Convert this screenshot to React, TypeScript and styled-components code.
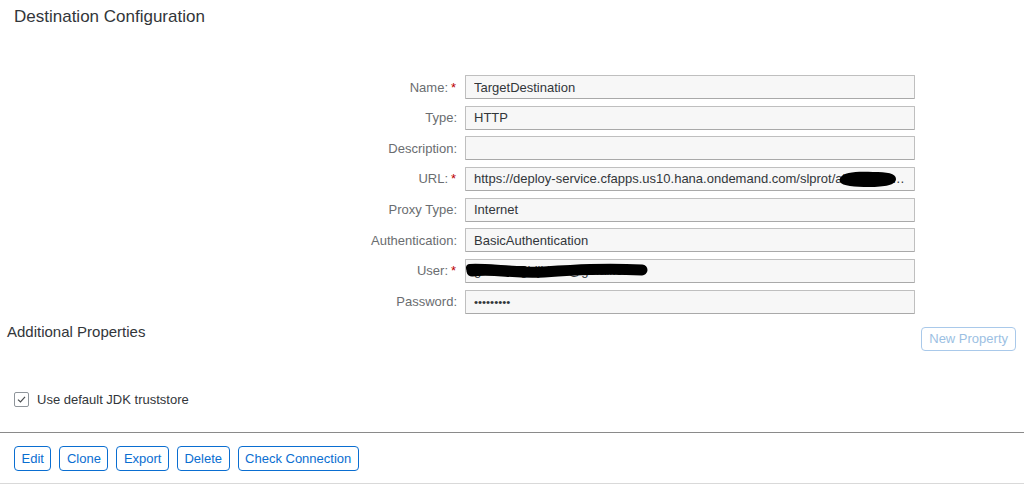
import styled, { createGlobalStyle } from "styled-components";
import type { JSX } from "react";

const GlobalStyle = createGlobalStyle`
  html, body {
    margin: 0;
    padding: 0;
    background: #ffffff;
    font-family: "Liberation Sans", Arial, sans-serif;
    color: #32363a;
  }
`;

type Field = {
  label: string;
  value: string;
  required?: boolean;
  redact?: "url" | "user";
};

const fields: Field[] = [
  { label: "Name:", value: "TargetDestination", required: true },
  { label: "Type:", value: "HTTP" },
  { label: "Description:", value: "" },
  {
    label: "URL:",
    value:
      "https://deploy-service.cfapps.us10.hana.ondemand.com/slprot/abcdefghijk/destination",
    required: true,
    redact: "url",
  },
  { label: "Proxy Type:", value: "Internet" },
  { label: "Authentication:", value: "BasicAuthentication" },
  { label: "User:", value: "gabcdefghijklmn@gmail.com", required: true, redact: "user" },
  { label: "Password:", value: "•••••••••" },
];

function App() {
  return (
    <Page>
      <GlobalStyle />
      <Title>Destination Configuration</Title>

      <Form>
        {fields.map((f) => (
          <FieldRow key={f.label} field={f} />
        ))}
      </Form>

      <SectionRow>
        <SectionTitle>Additional Properties</SectionTitle>
        <GhostButton disabled>New Property</GhostButton>
      </SectionRow>

      <CheckRow>
        <CheckBox>
          <svg width="11" height="11" viewBox="0 0 11 11">
            <path d="M2 5.6 L4.5 8 L9 2.8" fill="none" stroke="#4a4d50" strokeWidth="1.2" />
          </svg>
        </CheckBox>
        <CheckLabel>Use default JDK truststore</CheckLabel>
      </CheckRow>

      <Footer>
        <ActionButton>Edit</ActionButton>
        <ActionButton>Clone</ActionButton>
        <ActionButton>Export</ActionButton>
        <ActionButton>Delete</ActionButton>
        <ActionButton>Check Connection</ActionButton>
      </Footer>
    </Page>
  );
}

function FieldRow({ field }: { field: Field }): JSX.Element {
  return (
    <>
      <Label>
        {field.label}
        <Star $show={!!field.required}>*</Star>
      </Label>
      <InputBox $password={field.label === "Password:"}>
        <InputText>{field.value}</InputText>
        {field.redact === "url" && (
          <Redaction style={{ left: 371, top: 2 }} width="62" height="19" viewBox="0 0 62 19">
            <path
              d="M4 7 C6 2 22 1 36 2 C50 2 59 3 59 9 C59 15 48 17 32 17 C18 17 5 16 3 12 C2 10 3 8 4 7 Z"
              fill="#000"
            />
          </Redaction>
        )}
        {field.redact === "user" && (
          <Redaction style={{ left: -2, top: 2 }} width="186" height="20" viewBox="0 0 186 20">
            <path
              d="M8 9 C30 6 50 12 80 10 C110 8 140 6 178 8"
              fill="none"
              stroke="#000"
              strokeWidth="11"
              strokeLinecap="round"
            />
            <path d="M6 6 C20 5 40 8 60 8" fill="none" stroke="#000" strokeWidth="8" strokeLinecap="round" />
          </Redaction>
        )}
      </InputBox>
    </>
  );
}

const Page = styled.div`
  display: flex;
  flex-direction: column;
  width: 1024px;
`;

const Title = styled.h1`
  margin: 0;
  padding: 7px 0 0 14px;
  font-size: 17px;
  line-height: 20px;
  font-weight: normal;
  color: #32363a;
`;

const Form = styled.div`
  display: grid;
  grid-template-columns: 458px 450px;
  grid-auto-rows: 24px;
  column-gap: 7px;
  row-gap: 6.67px;
  margin-top: 48px;
`;

const Label = styled.div`
  display: flex;
  align-items: center;
  justify-content: flex-end;
  font-size: 13px;
  color: #6a6d70;
  white-space: nowrap;
`;

const Star = styled.span<{ $show: boolean }>`
  display: inline-block;
  width: 9px;
  margin-left: 1px;
  text-align: center;
  color: #bb0000;
  font-size: 13px;
  visibility: ${(p) => (p.$show ? "visible" : "hidden")};
  ${(p) => (p.$show ? "" : "width: 1px; margin-left: 0;")}
`;

const InputBox = styled.div<{ $password?: boolean }>`
  position: relative;
  display: flex;
  align-items: center;
  box-sizing: border-box;
  height: 24px;
  padding: 0 8px;
  background: #f7f7f7;
  border: 1px solid #bfbfbf;
  border-bottom-color: #a9a9a9;
  border-radius: 1px;
  font-size: ${(p) => (p.$password ? "11.5px" : "13px")};
  color: #32363a;
  overflow: hidden;
`;

const InputText = styled.span`
  display: block;
  white-space: nowrap;
  overflow: hidden;
  text-overflow: ellipsis;
  width: 100%;
`;

const Redaction = styled.svg`
  position: absolute;
`;

const SectionRow = styled.div`
  display: flex;
  justify-content: space-between;
  align-items: flex-start;
  margin-top: 9px;
  padding: 0 8px 0 7px;
`;

const SectionTitle = styled.h2`
  margin: 0;
  font-size: 15px;
  line-height: 18px;
  font-weight: normal;
  color: #32363a;
`;

const GhostButton = styled.button`
  margin-top: 4px;
  height: 24px;
  padding: 0 7px;
  background: #ffffff;
  border: 1px solid #a9c9ea;
  border-radius: 4px;
  font-family: "Liberation Sans", Arial, sans-serif;
  font-size: 13px;
  color: #9cbfe3;
`;

const CheckRow = styled.div`
  display: flex;
  align-items: center;
  gap: 8px;
  margin-top: 41px;
  padding-left: 14px;
  height: 16px;
`;

const CheckBox = styled.span`
  display: flex;
  align-items: center;
  justify-content: center;
  box-sizing: border-box;
  width: 15px;
  height: 15px;
  border: 1px solid #8f959b;
  border-radius: 2px;
  background: #ffffff;
`;

const CheckLabel = styled.span`
  font-size: 13px;
  color: #32363a;
`;

const Footer = styled.div`
  display: flex;
  gap: 8px;
  margin-top: 24px;
  padding: 13px 14px 12px;
  border-top: 1.5px solid #8a8a8a;
  border-bottom: 1px solid #d9d9d9;
`;

const ActionButton = styled.button`
  height: 25px;
  padding: 0 6.5px;
  background: #ffffff;
  border: 1px solid #0a6ed1;
  border-radius: 4px;
  font-family: "Liberation Sans", Arial, sans-serif;
  font-size: 13px;
  color: #0a6ed1;
  cursor: pointer;
`;

export default App;
